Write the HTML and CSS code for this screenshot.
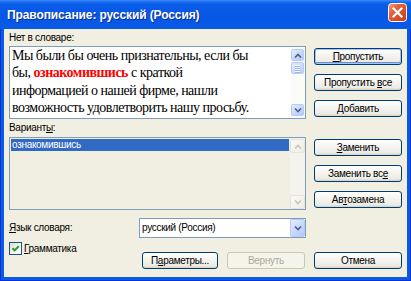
FILE: index.html
```html
<!DOCTYPE html>
<html lang="ru">
<head>
<meta charset="utf-8">
<title>Правописание</title>
<link rel="stylesheet" href="styles.css">
</head>
<body>
<div class="window">
  <div class="titlebar">
    <span class="title">Правописание: русский (Россия)</span>
    <span class="close">
      <svg width="19" height="19" viewBox="0 0 19 19">
        <defs>
          <linearGradient id="cg" x1="0" y1="0" x2="1" y2="1">
            <stop offset="0" stop-color="#F3A58C"/>
            <stop offset="0.35" stop-color="#E5603A"/>
            <stop offset="1" stop-color="#C23A1C"/>
          </linearGradient>
        </defs>
        <rect x="0.5" y="0.5" width="18" height="18" rx="3" fill="url(#cg)" stroke="#fff"/>
        <path d="M5.5 5.5L13.5 13.5M13.5 5.5L5.5 13.5" stroke="#fff" stroke-width="2.2" stroke-linecap="square"/>
      </svg>
    </span>
  </div>
  <div class="client">
    <div class="main">
      <div class="leftcol">
        <div class="label first">Нет в словаре:</div>
        <div class="textbox">
          <div class="text">Мы были бы очень признательны, если бы<br>бы, <span class="err">ознакомившись</span> с краткой<br>информацией о нашей фирме, нашли<br>возможность удовлетворить нашу просьбу.</div>
          <div class="scroll">
            <span class="sbtn"><svg width="8" height="5" viewBox="0 0 8 5"><polyline points="1,4.5 4,1.5 7,4.5" fill="none" stroke="#4D6185" stroke-width="1.6"/></svg></span>
            <span class="thumb"><i></i><i></i><i></i><i></i></span>
            <span class="track"></span>
            <span class="sbtn"><svg width="8" height="5" viewBox="0 0 8 5"><polyline points="1,0.5 4,3.5 7,0.5" fill="none" stroke="#4D6185" stroke-width="1.6"/></svg></span>
          </div>
        </div>
        <div class="label second">Вариант<u>ы</u>:</div>
        <div class="listbox">
          <div class="items"><div class="item sel">ознакомившись</div></div>
          <div class="scroll dis">
            <span class="sbtn"><svg width="8" height="5" viewBox="0 0 8 5"><polyline points="1,4.5 4,1.5 7,4.5" fill="none" stroke="#C9C7BA" stroke-width="1.6"/></svg></span>
            <span class="track"></span>
            <span class="sbtn"><svg width="8" height="5" viewBox="0 0 8 5"><polyline points="1,0.5 4,3.5 7,0.5" fill="none" stroke="#C9C7BA" stroke-width="1.6"/></svg></span>
          </div>
        </div>
      </div>
      <div class="rightcol">
        <div class="group">
          <button class="btn def"><u>П</u>ропустить</button>
          <button class="btn">Пропустить <u>в</u>се</button>
          <button class="btn"><u>Д</u>обавить</button>
        </div>
        <div class="group">
          <button class="btn"><u>З</u>аменить</button>
          <button class="btn">Заменить вс<u>е</u></button>
          <button class="btn">Ав<u>т</u>озамена</button>
        </div>
      </div>
    </div>
    <div class="bottom">
      <div class="bleft">
        <div class="langlabel"><u>Я</u>зык словаря:</div>
        <div class="check">
          <span class="box"><svg width="11" height="11" viewBox="0 0 11 11"><path d="M2.5 5.2L4.6 7.4L8.8 3.2" fill="none" stroke="#21A121" stroke-width="2"/></svg></span>
          <span><u>Г</u>рамматика</span>
        </div>
      </div>
      <div class="bright">
        <div class="combo">
          <span class="cval">русский (Россия)</span>
          <span class="dd"><svg width="8" height="5" viewBox="0 0 8 5"><polyline points="1,0.5 4,3.5 7,0.5" fill="none" stroke="#4D6185" stroke-width="1.6"/></svg></span>
        </div>
        <div class="btnrow">
          <button class="btn w76">П<u>а</u>раметры...</button>
          <button class="btn w78 disabled">Вернуть</button>
          <button class="btn w88">Отмена</button>
        </div>
      </div>
    </div>
  </div>
</div>
</body>
</html>
```

FILE: styles.css
```css
html, body {
  margin: 0;
  padding: 0;
  background: #ffffff;
}

body {
  font-family: "Liberation Sans", Arial, sans-serif;
  font-size: 10px;
  letter-spacing: -0.3px;
  color: #000000;
}

.window {
  width: 411px;
  height: 281px;
  box-sizing: border-box;
  display: flex;
  flex-direction: column;
  background: #0A5AE4;
  box-shadow: inset 1px 0 #0831D9, inset -1px 0 #0831D9, inset 0 -1px #0831D9;
}

.titlebar {
  height: 29px;
  flex: none;
  display: flex;
  align-items: center;
  justify-content: space-between;
  padding: 0 4px 0 7px;
  background: linear-gradient(to bottom, #3D8DFB 0px, #1A6CF0 2px, #0A5DE8 4px, #0657E4 60%, #0A5BE6 100%);
}

.title {
  color: #ffffff;
  font-weight: bold;
  font-size: 12px;
  letter-spacing: -0.1px;
  text-shadow: 1px 1px 0 #0A2BA0;
  margin-top: 1px;
}

.close {
  align-self: flex-start;
  margin-top: 3px;
  width: 19px;
  height: 19px;
  display: flex;
}

.client {
  flex: 1;
  margin: 0 4px 4px 4px;
  background: #F1EFE2;
  padding: 2px 5px 0 5px;
  box-sizing: border-box;
}

.main {
  display: flex;
  gap: 8px;
}

.leftcol {
  width: 297px;
  display: flex;
  flex-direction: column;
}

.label {
  box-sizing: border-box;
  line-height: 12px;
}

.label.first {
  height: 15px;
  padding-top: 1px;
}

.label.second {
  height: 18px;
  padding-top: 3px;
}

.textbox, .listbox {
  height: 73px;
  box-sizing: border-box;
  border: 1px solid #7F9DB9;
  background: #F1EFE2;
  display: flex;
}

.textbox {
  background: #ffffff;
}

.text {
  flex: 1;
  padding-left: 2px;
  font-family: "Liberation Serif", "Times New Roman", serif;
  font-size: 14px;
  line-height: 17.3px;
  letter-spacing: -0.5px;
  white-space: nowrap;
  overflow: hidden;
}

.err {
  color: #FF0000;
  font-weight: bold;
}

.scroll {
  width: 14px;
  box-sizing: border-box;
  padding: 2px 1px 2px 0;
  display: flex;
  flex-direction: column;
  background: #FBFBF8;
}

.sbtn {
  height: 12px;
  box-sizing: border-box;
  border: 1px solid #B7CBF5;
  border-radius: 2px;
  background: linear-gradient(135deg, #E4ECFE 0%, #C5D6FC 60%, #B4C8F6 100%);
  display: flex;
  align-items: center;
  justify-content: center;
}

.thumb {
  height: 12px;
  margin-top: 1px;
  box-sizing: border-box;
  border: 1px solid #B7CBF5;
  border-radius: 2px;
  background: linear-gradient(135deg, #E4ECFE 0%, #C9D9FC 60%, #B9CCF7 100%);
  display: flex;
  flex-direction: column;
  align-items: center;
  justify-content: center;
  gap: 1px;
}

.thumb i {
  display: block;
  width: 5px;
  height: 1px;
  background: #F4F8FF;
  box-shadow: 0 1px #9CB7F0;
}

.track {
  flex: 1;
}

.listbox .scroll.dis {
  width: 15px;
  padding: 1px 0 0 0;
  background: #F4F3EE;
}

.scroll.dis .sbtn {
  height: 14px;
  border: 1px solid #E6E4DA;
  background: linear-gradient(135deg, #FAF9F4 0%, #EEEDE5 100%);
}

.items {
  flex: 1;
  padding: 1px;
  background: #F1EFE2;
}

.item {
  height: 12px;
  line-height: 12px;
  padding-left: 1px;
}

.item.sel {
  background: #316AC5;
  color: #ffffff;
}

.rightcol {
  width: 88px;
  padding-top: 17px;
  display: flex;
  flex-direction: column;
  gap: 22px;
}

.group {
  display: flex;
  flex-direction: column;
  gap: 9px;
}

.btn {
  height: 17px;
  width: 88px;
  box-sizing: border-box;
  padding: 0;
  margin: 0;
  border: 1px solid #003C74;
  border-radius: 3px;
  background: linear-gradient(to bottom, #FFFFFF 0%, #F6F5F0 40%, #ECEBE5 85%, #D6D0C5 100%);
  font-family: "Liberation Sans", Arial, sans-serif;
  font-size: 10px;
  letter-spacing: -0.3px;
  color: #000000;
  line-height: 14px;
  text-align: center;
  white-space: nowrap;
}

.btn.def {
  box-shadow: inset 0 0 0 1px #A9C4F0, inset 0 -1px 0 1px #6E8FD8;
}

.btn.w76 { width: 76px; }
.btn.w78 { width: 78px; }
.btn.w88 { width: 88px; }

.btn.disabled {
  border-color: #C9C7BA;
  background: #F5F4EA;
  color: #ACA899;
}

.bottom {
  margin-top: 8px;
  display: flex;
}

.bleft {
  width: 130px;
  display: flex;
  flex-direction: column;
}

.langlabel {
  height: 20px;
  line-height: 20px;
}

.check {
  margin-top: 4px;
  display: flex;
  align-items: center;
  gap: 2px;
  height: 13px;
  line-height: 13px;
}

.box {
  width: 13px;
  height: 13px;
  box-sizing: border-box;
  border: 1px solid #1C5180;
  background: linear-gradient(135deg, #DCDCD7 0%, #F5F5F2 60%, #FFFFFF 100%);
  display: flex;
  align-items: center;
  justify-content: center;
}

.bright {
  display: flex;
  flex-direction: column;
}

.combo {
  width: 167px;
  height: 20px;
  box-sizing: border-box;
  border: 1px solid #7F9DB9;
  background: #ffffff;
  display: flex;
  align-items: stretch;
}

.cval {
  flex: 1;
  padding-left: 2px;
  line-height: 18px;
}

.dd {
  width: 15px;
  box-sizing: border-box;
  border: 1px solid #B7CBF5;
  border-radius: 2px;
  background: linear-gradient(135deg, #E4ECFE 0%, #C5D6FC 60%, #B4C8F6 100%);
  display: flex;
  align-items: center;
  justify-content: center;
}

.btnrow {
  margin-top: 14px;
  padding-left: 3px;
  display: flex;
  gap: 9px;
}
```
